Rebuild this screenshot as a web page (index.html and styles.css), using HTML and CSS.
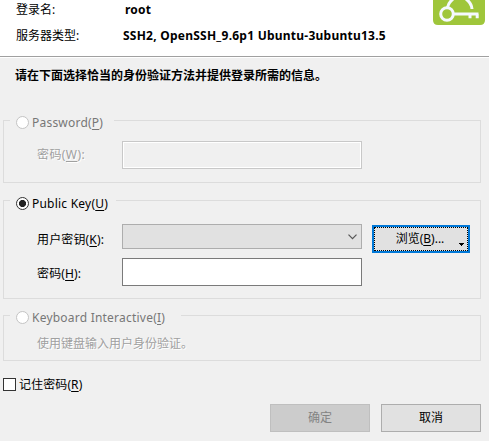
FILE: index.html
```html
<!DOCTYPE html>
<html lang="zh-CN">
<head>
<meta charset="utf-8">
<title>SSH</title>
<link rel="stylesheet" href="styles.css">
</head>
<body>
<header class="header">
  <dl class="info">
    <dt>登录名:</dt><dd class="login">root</dd>
    <dt>服务器类型:</dt><dd class="server">SSH2, OpenSSH_9.6p1 Ubuntu-3ubuntu13.5</dd>
  </dl>
  <svg class="logo" width="52" height="25" viewBox="0 0 52 25">
    <path d="M0 0H52V20Q52 25 47 25H5Q0 25 0 20Z" fill="#9fc63b"/>
    <g fill="none" stroke="#f5f9ff" stroke-width="3">
      <circle cx="14" cy="14" r="6.3"/>
      <path d="M20 14H45.5M37 14V18.2M44.2 14V18.2"/>
      <path d="M14.5 7.5Q15.5 2.5 20 -1M33 -1Q38.5 3 39 9"/>
    </g>
  </svg>
</header>
<main class="content">
  <h1 class="prompt">请在下面选择恰当的身份验证方法并提供登录所需的信息。</h1>

  <section class="group group-password">
    <label class="legend muted"><span class="radio off"></span><span class="title">Password(<u>P</u>)</span></label>
    <div class="row">
      <span class="name etched spaced">密码(<u>W</u>):</span>
      <div class="field disabled"></div>
    </div>
  </section>

  <section class="group group-key">
    <label class="legend"><span class="radio on"></span><span class="title">Public Key(<u>U</u>)</span></label>
    <div class="key-grid">
      <span class="name key-name">用户密钥(<u>K</u>):</span>
      <div class="select"><svg width="9" height="6" viewBox="0 0 9 6"><path d="M.5 .7L4.5 4.7L8.5 .7" fill="none" stroke="#555" stroke-width="1.2"/></svg></div>
      <button class="browse"><span>浏览(<u>B</u>)...</span><svg class="drop" width="5" height="3" viewBox="0 0 5 3"><path d="M0 0H5V1H4V2H3V3H2V2H1V1H0Z"/></svg></button>
      <span class="name pass-name">密码(<u>H</u>):</span>
      <div class="field"></div>
    </div>
  </section>

  <section class="group group-keyboard">
    <label class="legend muted"><span class="radio off"></span><span class="title">Keyboard Interactive(<u>I</u>)</span></label>
    <p class="note etched">使用键盘输入用户身份验证。</p>
  </section>

  <label class="remember"><span class="check"></span><span>记住密码(<u>R</u>)</span></label>

  <footer class="actions">
    <button class="btn btn-off">确定</button>
    <button class="btn">取消</button>
  </footer>
</main>
</body>
</html>
```

FILE: styles.css
```css
* { box-sizing: border-box; }
body {
  margin: 0;
  width: 489px;
  height: 441px;
  overflow: hidden;
  background: #f0f0f0;
  color: #000;
  font: 12px/16px "Noto Sans", "Noto Sans CJK SC", sans-serif;
  white-space: nowrap;
}
u { text-decoration: underline; text-underline-offset: 2px; text-decoration-thickness: 1px; text-decoration-skip-ink: none; }
.header {
  display: flex;
  justify-content: space-between;
  height: 58px;
  padding-right: 4px;
  background: #fff;
  box-shadow: inset 0 -1px #fff, inset 0 -2px #a0a0a0;
}
.info {
  display: grid;
  grid-template-columns: 107px auto;
  grid-auto-rows: 26px;
  margin: 2px 0 0 16px;
}
dd { margin: 0; font-weight: 700; letter-spacing: .24px; }
.login { padding-left: 2px; }
.logo { display: block; }
.content { display: block; padding: 10px 8px 0 3px; }
.prompt { margin: 0 0 0 12px; font-size: 12px; line-height: 16px; font-weight: 600; }
.group { border: 1px solid #dcdcdc; }
.group-password { height: 63px; margin-top: 36px; }
.group-key { height: 99px; margin-top: 17px; }
.group-keyboard { height: 46px; margin-top: 16px; }
.legend {
  display: flex;
  align-items: center;
  gap: 3px;
  height: 17px;
  width: 104px;
  margin: -7px 0 0 6px;
  padding-left: 6px;
  background: #f0f0f0;
}
.title { padding-top: 1px; letter-spacing: .22px; }
.group-key .legend { width: 106px; margin-top: -6px; }
.group-keyboard .legend { width: 171px; }
.muted { color: #777; }
.radio {
  flex: none;
  width: 13px;
  height: 13px;
  border: 1px solid #333;
  border-radius: 50%;
  background: #fff;
}
.radio.off { border-color: #c4c4c4; }
.radio.on { background: radial-gradient(circle, #222 3.2px, #fff 3.9px); }
.row { display: flex; margin-top: 10px; padding-left: 33px; }
.name { width: 85px; letter-spacing: .15px; }
.name.spaced { letter-spacing: .4px; }
.row .name { padding-top: 6px; }
.etched { color: #a0a0a0; text-shadow: 1px 1px #fff; }
.field { width: 240px; height: 28px; border: 1px solid #7a7a7a; background: #fff; }
.field.disabled { border-color: #c8c8c8; background: #f0f0f0; box-shadow: inset 0 0 0 1px #fff; }
.key-grid {
  display: grid;
  grid-template-columns: 85px 240px 98px;
  grid-template-rows: 34px 28px;
  margin: 12px 0 0 33px;
}
.key-name { padding-top: 8px; }
.pass-name { padding-top: 8px; }
.select {
  display: flex;
  align-items: center;
  justify-content: flex-end;
  height: 25px;
  padding-right: 4px;
  border: 1px solid #adadad;
  background: #e1e1e1;
}
button { font: inherit; color: inherit; padding: 0; border-radius: 0; }
.browse {
  position: relative;
  width: 98px;
  height: 28px;
  margin: 1px 0 0 10px;
  padding-right: 2px;
  border: 2px solid #0078d7;
  outline: 1px dotted #000;
  outline-offset: -3px;
  background: #e1e1e1;
}
.drop { position: absolute; right: 4px; bottom: 5px; }
.note { margin: 10px 0 0 33px; }
.remember { display: flex; align-items: center; gap: 3px; height: 17px; margin-top: 15px; letter-spacing: .1px; }
.check { width: 13px; height: 13px; border: 1px solid #333; background: #fff; }
.actions { display: flex; justify-content: flex-end; gap: 11px; margin-top: 11px; }
.btn { width: 100px; height: 28px; border: 1px solid #adadad; background: #e1e1e1; }
.btn-off { border-color: #bfbfbf; background: #ccc; color: #838383; }
```
